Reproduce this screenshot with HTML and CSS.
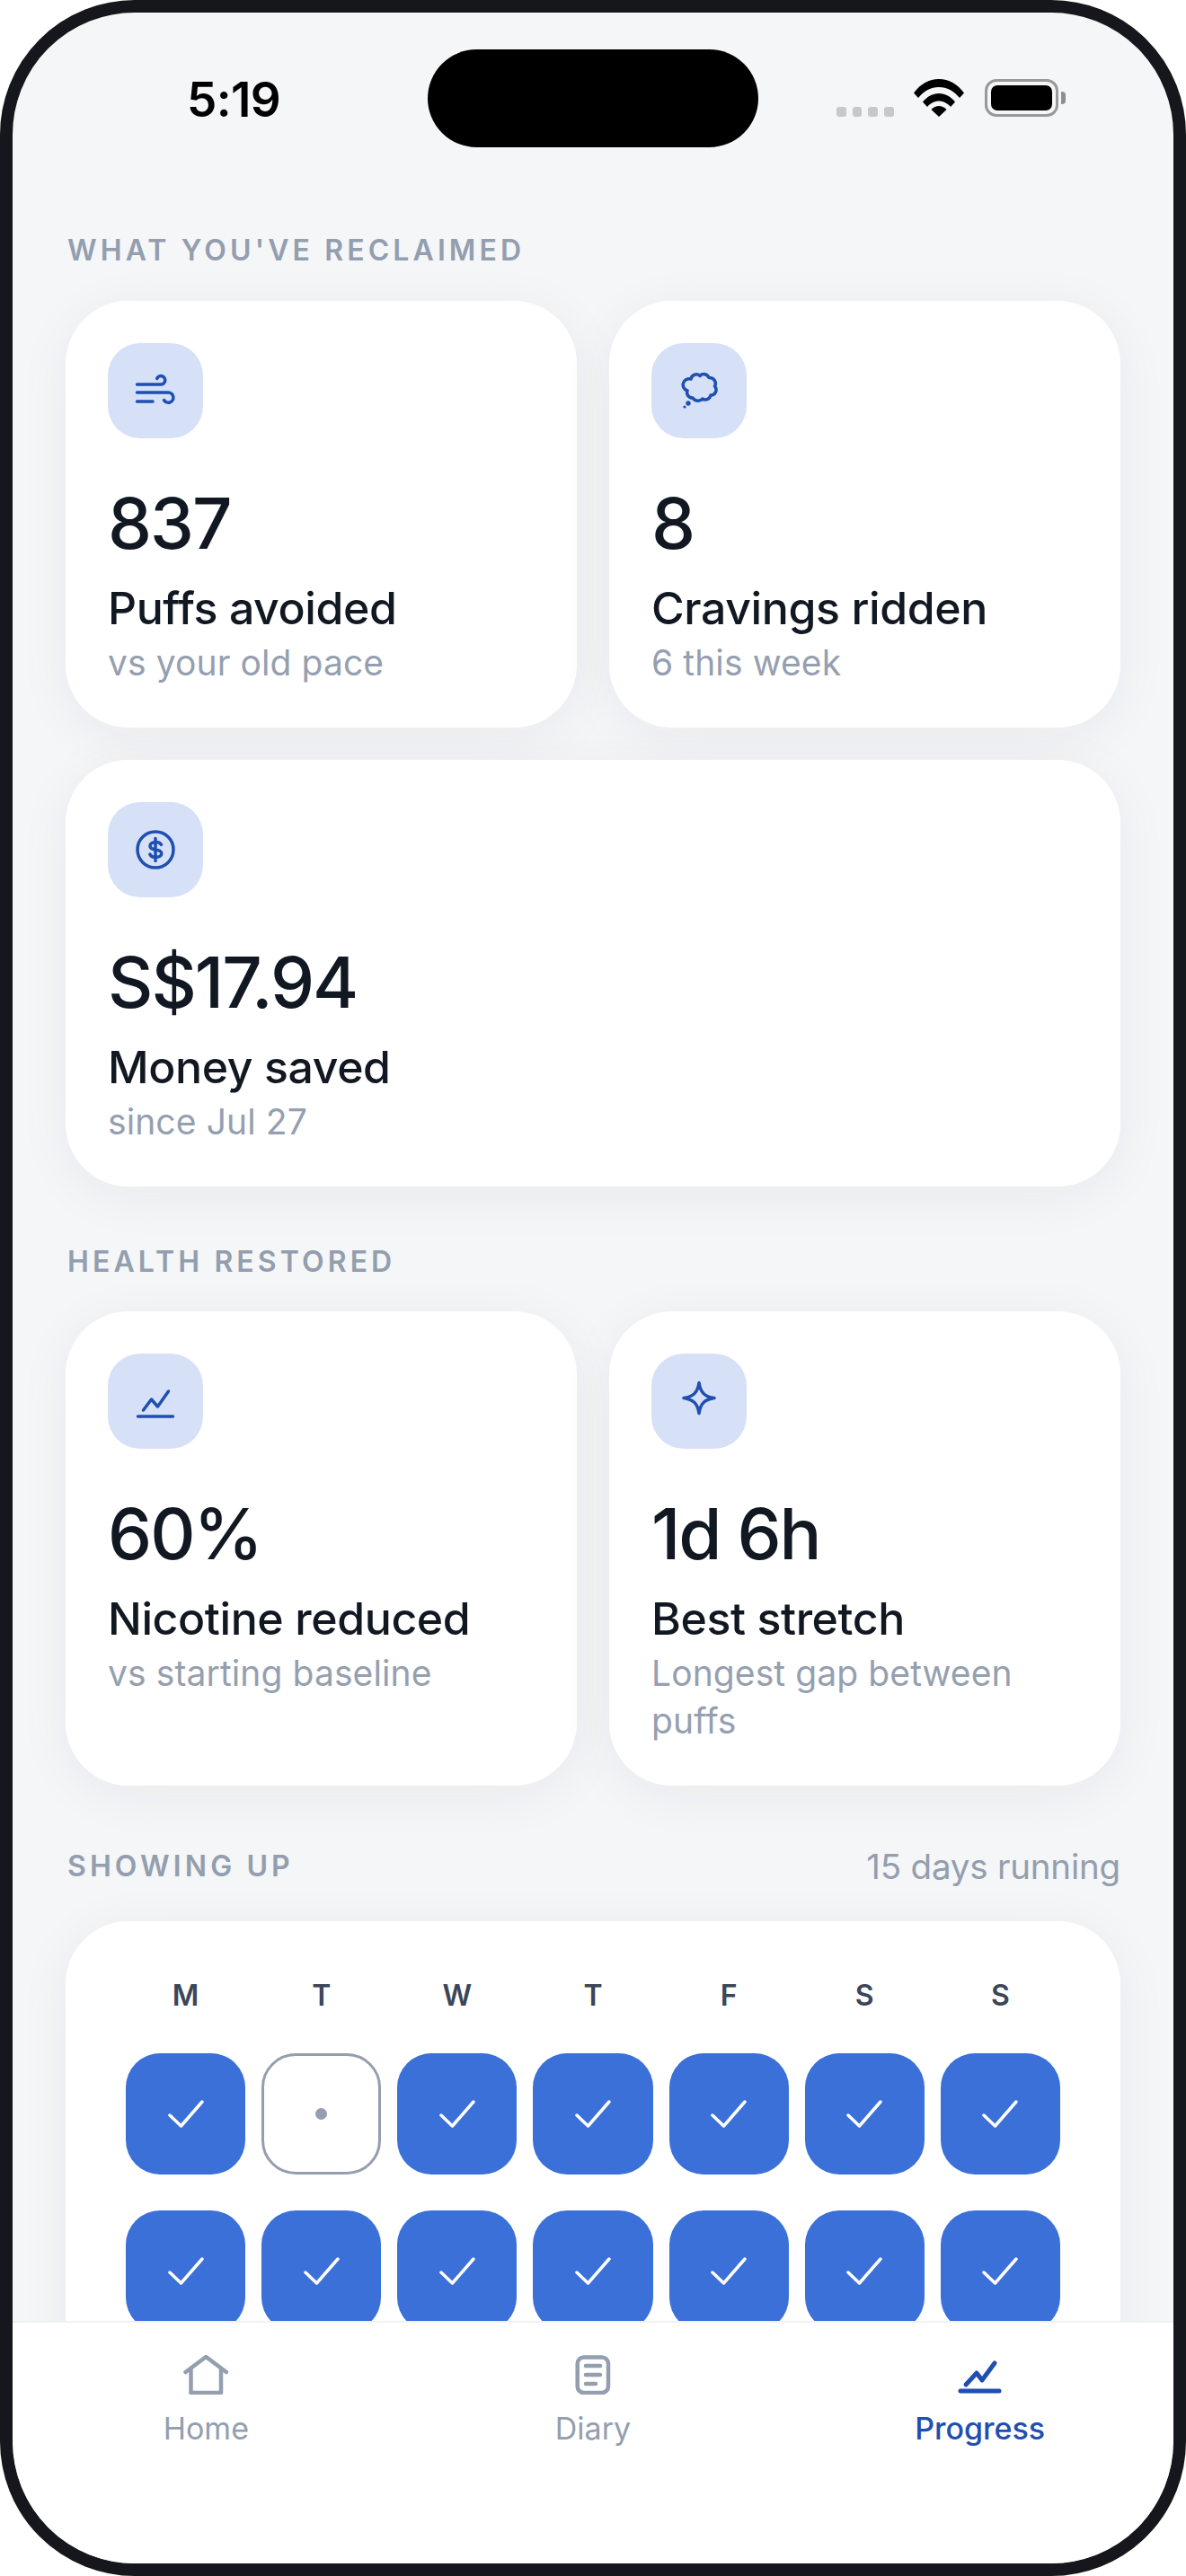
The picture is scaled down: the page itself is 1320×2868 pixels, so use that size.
FILE: index.html
```html
<!DOCTYPE html>
<html lang="en">
<head>
<meta charset="utf-8">
<title>Progress</title>
<link rel="stylesheet" href="styles.css">
</head>
<body>
<div class="phone">
  <div class="screen">
    <div class="status">
      <div class="time">5:19</div>
      <div class="island"></div>
      <div class="sys">
        <div class="dots"><i></i><i></i><i></i><i></i></div>
        <svg class="wifi" viewBox="0 0 56 42"><path d="M0 15.500C7.500 5.500 17 0 28 0s20.500 5.500 28 15.500l-5 5.500C44.500 13 37 9 28 9S11.500 13 5 21z"/><path d="M10 25.500C15 19.500 21 16 28 16s13 3.500 18 9.500l-5 5.500C37.500 27 33 24.500 28 24.500S18.500 27 15 31z"/><path d="M19.500 34C22 31.500 25 30 28 30s6 1.500 8.500 4L28 42z"/></svg>
        <div class="battery"><div class="battery-body"><div class="battery-fill"></div></div><div class="battery-nub"></div></div>
      </div>
    </div>
    <main class="scroll">
      <div class="section-head first"><span class="section-title">WHAT YOU'VE RECLAIMED</span></div>
      <div class="grid">
        <div class="card">
          <div class="tile"><svg class="ico" viewBox="0 0 48 48"><path d="M3.500 17H30a4.700 4.700 0 1 0-4.300-6.500M3.500 26H38a5.600 5.600 0 1 1-4.500 8.500M3.500 36H21"/></svg></div>
          <div class="num">837</div><div class="name">Puffs avoided</div><div class="sub">vs your old pace</div>
        </div>
        <div class="card">
          <div class="tile"><svg class="ico" viewBox="0 0 48 48"><path d="M15 11A6 6 0 0 1 25 7.500A6 6 0 0 1 35 9.500A6.500 6.500 0 0 1 41.500 19A6 6 0 0 1 37 29A6 6 0 0 1 28 33A7 7 0 0 1 17 32A6 6 0 0 1 11 24A6 6 0 0 1 15 11Z"/><circle class="fill" cx="12" cy="38" r="2.700"/><circle class="fill" cx="8" cy="42" r="1.600"/></svg></div>
          <div class="num">8</div><div class="name">Cravings ridden</div><div class="sub">6 this week</div>
        </div>
        <div class="card wide">
          <div class="tile"><svg class="ico" viewBox="0 0 48 48"><circle cx="24" cy="24" r="20"/><path d="M30.500 18.500c-1-2-3.500-3-6.200-3-3.700 0-6.300 1.800-6.300 4.300 0 6 12.800 2.500 12.800 8.500 0 2.600-2.800 4.200-6.500 4.200-3 0-5.500-1.200-6.500-3.500M24 11.500v25"/></svg></div>
          <div class="num">S$17.94</div><div class="name">Money saved</div><div class="sub">since Jul 27</div>
        </div>
      </div>
      <div class="section-head second"><span class="section-title">HEALTH RESTORED</span></div>
      <div class="grid">
        <div class="card">
          <div class="tile"><svg class="ico" viewBox="0 0 48 48"><path d="M10.500 34l9-12 7 8 12-17M4.500 41h39"/></svg></div>
          <div class="num">60%</div><div class="name">Nicotine reduced</div><div class="sub">vs starting baseline</div>
        </div>
        <div class="card">
          <div class="tile"><svg class="ico" viewBox="0 0 48 48"><path d="M24 3.500C25.500 14 30 19 41 20.500 30 22 25.500 27 24 37.500 22.500 27 18 22 7 20.500 18 19 22.500 14 24 3.500Z"/></svg></div>
          <div class="num">1d 6h</div><div class="name">Best stretch</div><div class="sub">Longest gap between puffs</div>
        </div>
      </div>
      <div class="section-head third"><span class="section-title">SHOWING UP</span><span class="section-note">15 days running</span></div>
      <div class="card streak">
        <div class="week days"><span>M</span><span>T</span><span>W</span><span>T</span><span>F</span><span>S</span><span>S</span></div>
        <div class="week">
          <div class="cell done"><svg viewBox="0 0 40 32"><path d="M2 17l12.500 12L38 2"/></svg></div>
          <div class="cell empty"><i></i></div>
          <div class="cell done"><svg viewBox="0 0 40 32"><path d="M2 17l12.500 12L38 2"/></svg></div>
          <div class="cell done"><svg viewBox="0 0 40 32"><path d="M2 17l12.500 12L38 2"/></svg></div>
          <div class="cell done"><svg viewBox="0 0 40 32"><path d="M2 17l12.500 12L38 2"/></svg></div>
          <div class="cell done"><svg viewBox="0 0 40 32"><path d="M2 17l12.500 12L38 2"/></svg></div>
          <div class="cell done"><svg viewBox="0 0 40 32"><path d="M2 17l12.500 12L38 2"/></svg></div>
        </div>
        <div class="week">
          <div class="cell done"><svg viewBox="0 0 40 32"><path d="M2 17l12.500 12L38 2"/></svg></div>
          <div class="cell done"><svg viewBox="0 0 40 32"><path d="M2 17l12.500 12L38 2"/></svg></div>
          <div class="cell done"><svg viewBox="0 0 40 32"><path d="M2 17l12.500 12L38 2"/></svg></div>
          <div class="cell done"><svg viewBox="0 0 40 32"><path d="M2 17l12.500 12L38 2"/></svg></div>
          <div class="cell done"><svg viewBox="0 0 40 32"><path d="M2 17l12.500 12L38 2"/></svg></div>
          <div class="cell done"><svg viewBox="0 0 40 32"><path d="M2 17l12.500 12L38 2"/></svg></div>
          <div class="cell done"><svg viewBox="0 0 40 32"><path d="M2 17l12.500 12L38 2"/></svg></div>
        </div>
      </div>
    </main>
    <nav class="tabs">
      <div class="tab"><svg class="tab-ico" viewBox="0 0 50 44"><path d="M2.500 19L25.300 2 48 19M8.500 15v27H42V15"/></svg><span>Home</span></div>
      <div class="tab"><svg class="tab-ico" viewBox="0 0 50 44"><rect x="7.700" y="2.500" width="34.300" height="39.500" rx="7"/><path d="M17 12h16M17 22h16M17 32h11"/></svg><span>Diary</span></div>
      <div class="tab active"><svg class="tab-ico" viewBox="0 0 50 44"><path d="M9 33l12-13 6 8L41 9M3 40h43"/></svg><span>Progress</span></div>
    </nav>
  </div>
</div>
</body>
</html>
```

FILE: styles.css
```css
* { box-sizing: border-box; }
html, body { margin: 0; padding: 0; background: #fff; }
body { width: 1320px; height: 2868px; font-family: Inter, "Noto Sans", sans-serif; color: #111822; }
.phone { width: 1320px; height: 2868px; border: 14px solid #16171c; border-radius: 150px; background: #f5f6f8; overflow: hidden; }
.screen { height: 2840px; display: flex; flex-direction: column; overflow: hidden; border-radius: 136px; }

.status { flex: none; height: 205px; padding: 41px 0 0 194px; display: flex; align-items: flex-start; }
.time { width: 268px; margin-top: 26px; font-size: 53px; line-height: 60px; font-weight: 600; color: #000; letter-spacing: -.6px; }
.island { width: 368px; height: 109px; border-radius: 55px; background: #000; }
.sys { display: flex; align-items: flex-start; margin-left: 87px; margin-top: 33px; }
.dots { display: flex; gap: 7px; margin-top: 31px; }
.dots i { display: block; width: 10.700px; height: 11px; border-radius: 3px; background: #c8c8c8; }
.wifi { width: 56px; height: 42px; margin-left: 22px; fill: #000; }
.battery { display: flex; align-items: center; margin-left: 23px; }
.battery-body { width: 82px; height: 42px; border: 3px solid #999; border-radius: 13px; padding: 4px; }
.battery-fill { width: 100%; height: 100%; background: #000; border-radius: 7px; }
.battery-nub { width: 5px; height: 14px; margin-left: 3px; background: #8e8e8e; border-radius: 0 4px 4px 0; }

.scroll { flex: 1; min-height: 0; overflow: hidden; padding: 0 59px; }
.section-head { display: flex; justify-content: space-between; align-items: center; height: 32px; padding-left: 2px; }
.section-head.first { margin: 44px 0 40px; }
.section-head.second { margin: 68px 0 39px; }
.section-head.third { margin: 74px 0 45px; }
.section-title { font-size: 32px; line-height: 32px; font-weight: 600; letter-spacing: 4.100px; color: #939eae; }
.section-note { font-size: 38.500px; line-height: 32px; color: #939eae; letter-spacing: -.2px; }

.grid { display: grid; grid-template-columns: 1fr 1fr; gap: 36px; }
.card { background: #fff; border-radius: 70px; padding: 47px 47px 46px; box-shadow: 0 10px 60px rgba(20, 30, 50, .06); }
.wide { grid-column: 1 / -1; }
.tile { width: 106px; height: 106px; border-radius: 36px; background: #d6e1f8; display: flex; align-items: center; justify-content: center; margin-bottom: 45px; }
.ico { width: 48px; height: 48px; fill: none; stroke: #1f4fb0; stroke-width: 3.500; stroke-linecap: round; stroke-linejoin: round; }
.ico .fill { fill: #1f4fb0; stroke: none; }
.num { font-size: 78px; line-height: 100px; font-weight: 500; letter-spacing: -2px; }
.name { font-size: 50px; line-height: 60px; font-weight: 500; letter-spacing: -.4px; margin-top: 14px; }
.sub { font-size: 39px; line-height: 53px; color: #959fb0; margin-top: 4px; letter-spacing: .1px; }

.streak { padding: 60px 67px 0; height: 700px; }
.week { display: grid; grid-template-columns: repeat(7, 1fr); gap: 18px; margin-bottom: 40px; }
.days { margin-bottom: 41px; }
.days span { text-align: center; font-size: 32px; line-height: 46px; font-weight: 600; color: #3b4658; }
.cell { height: 135px; border-radius: 38px; display: flex; align-items: center; justify-content: center; }
.done { background: #3b70d9; }
.done svg { width: 40px; height: 32px; fill: none; stroke: #fff; stroke-width: 3.500; stroke-linecap: round; stroke-linejoin: round; }
.empty { border: 3px solid #959eae; }
.empty i { display: block; width: 13px; height: 13px; border-radius: 50%; background: #959eae; }

.tabs { flex: none; position: relative; height: 270px; background: #fff; border-top: 2px solid #f0f1f3; display: grid; grid-template-columns: repeat(3, 1fr); padding-top: 36px; }
.tab { display: flex; flex-direction: column; align-items: center; color: #939eae; font-size: 34px; line-height: 40px; }
.tab-ico { width: 50px; height: 44px; fill: none; stroke: #939eae; stroke-width: 4.500; stroke-linecap: round; stroke-linejoin: round; margin-bottom: 18px; }
.active { color: #1f4fb0; font-weight: 500; }
.active .tab-ico { stroke: #1f4fb0; stroke-width: 5; }
```
